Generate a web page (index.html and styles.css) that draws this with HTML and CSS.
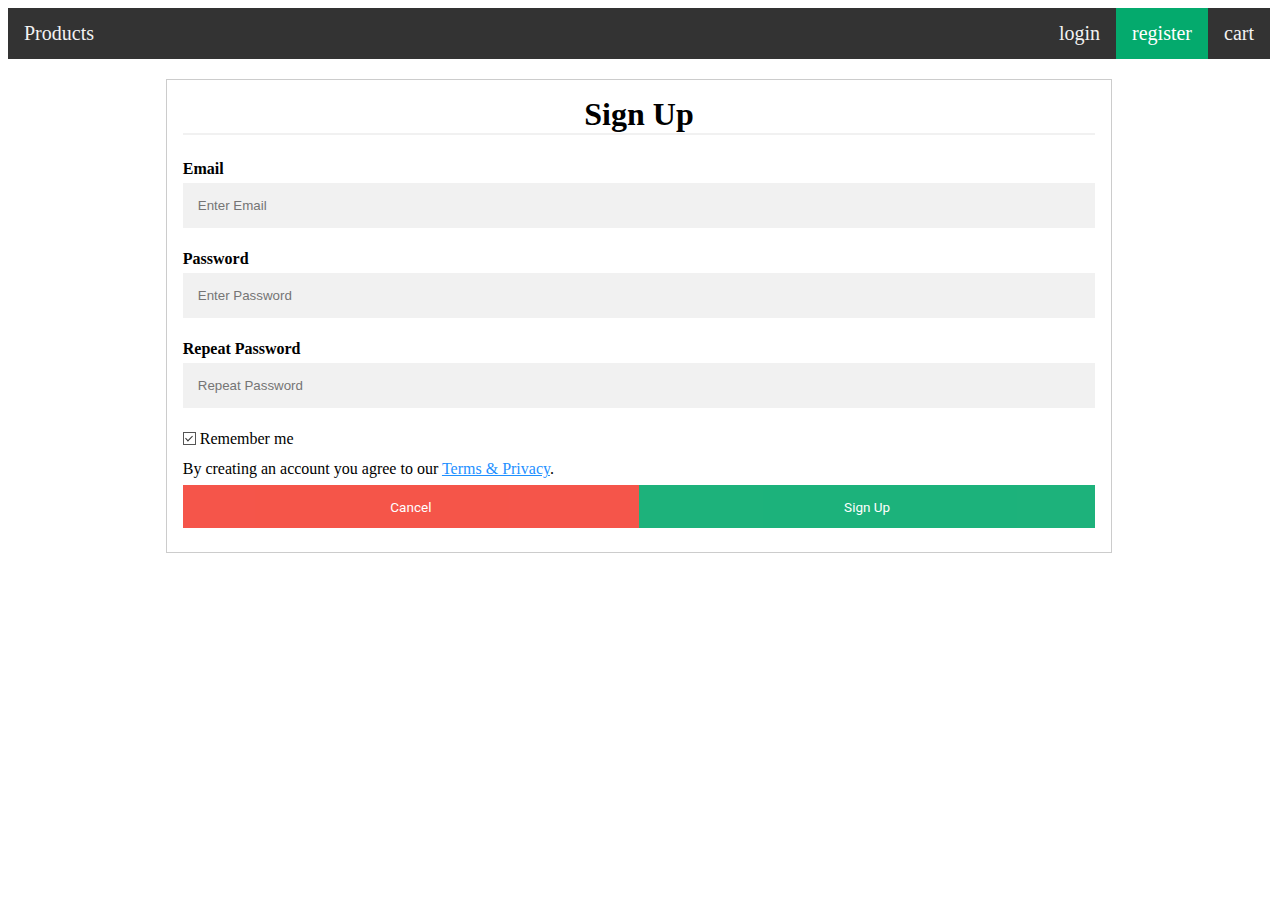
FILE: index.html
```html
<!DOCTYPE html>
<html>
<head>
<meta charset="utf-8">
<title>Sign Up</title>
<link rel="stylesheet" href="styles.css">
</head>
<body>
<nav class="topnav">
  <a class="nav-link" href="#">Products</a>
  <div class="nav-right">
    <a class="nav-link" href="#">login</a>
    <a class="nav-link active" href="#">register</a>
    <a class="nav-link" href="#">cart</a>
  </div>
</nav>
<form class="form-box">
  <h1 class="title">Sign Up</h1>
  <hr class="sep">
  <label class="field-label" for="email">Email</label>
  <input class="field" id="email" type="text" placeholder="Enter Email">
  <label class="field-label" for="psw">Password</label>
  <input class="field" id="psw" type="password" placeholder="Enter Password">
  <label class="field-label" for="psw2">Repeat Password</label>
  <input class="field" id="psw2" type="password" placeholder="Repeat Password">
  <label class="remember"><input class="check" type="checkbox" checked> Remember me</label>
  <p class="terms">By creating an account you agree to our <a class="terms-link" href="#">Terms &amp; Privacy</a>.</p>
  <div class="buttons">
    <button type="button" class="btn cancel">Cancel</button>
    <button type="button" class="btn signup">Sign Up</button>
  </div>
</form>
</body>
</html>
```
FILE: styles.css
```css
body {
  margin: 8px;
  font-family: "Liberation Serif", "Times New Roman", serif;
  font-size: 16px;
  color: #000;
  background: #fff;
}
.topnav {
  display: flex;
  justify-content: space-between;
  background: #333;
}
.nav-right {
  display: flex;
}
.nav-link {
  display: block;
  color: #f2f2f2;
  text-decoration: none;
  font-size: 20px;
  line-height: 23px;
  padding: 14px 16px;
}
.nav-link.active {
  background: #04AA6D;
  color: #fff;
}
.form-box {
  width: 75%;
  margin: 20px auto 0;
  border: 1px solid #ccc;
  padding: 16px;
  box-sizing: border-box;
}
.title {
  margin: 0;
  text-align: center;
  font-size: 32px;
  line-height: 37px;
  font-weight: bold;
}
.sep {
  margin: 0 0 25px;
  border: 1px solid #f1f1f1;
  height: 0;
}
.field-label {
  display: block;
  font-weight: bold;
  line-height: 18px;
}
.field {
  display: block;
  width: 100%;
  box-sizing: border-box;
  height: 45px;
  margin: 5px 0 22px;
  padding: 0 15px;
  border: none;
  background: #f1f1f1;
  font-family: "Liberation Sans", Arial, sans-serif;
  font-size: 13.33px;
  color: #000;
  outline: none;
}
.field::placeholder {
  color: #757575;
}
.remember {
  display: flex;
  align-items: center;
  height: 18px;
  line-height: 18px;
  margin-bottom: 12px;
}
.check {
  -webkit-appearance: none;
  appearance: none;
  position: relative;
  box-sizing: border-box;
  width: 13px;
  height: 13px;
  margin: 0 4px 1px 0;
  border: 1px solid #555;
  background: #fff;
  border-radius: 0;
}
.check:checked::after {
  content: "";
  position: absolute;
  left: 3px;
  top: 1px;
  width: 3px;
  height: 6px;
  border-right: 1.5px solid #333;
  border-bottom: 1.5px solid #333;
  transform: rotate(45deg);
}
.terms {
  margin: 0 0 7px;
  line-height: 18px;
}
.terms-link {
  color: dodgerblue;
}
.buttons {
  display: flex;
  margin-bottom: 8px;
}
.btn {
  flex: 1;
  height: 43px;
  border: none;
  color: #fff;
  font-family: Roboto, "Liberation Sans", sans-serif;
  font-size: 13.5px;
  opacity: 0.9;
  cursor: pointer;
}
.cancel {
  background: #f44336;
}
.signup {
  background: #04AA6D;
}
```
